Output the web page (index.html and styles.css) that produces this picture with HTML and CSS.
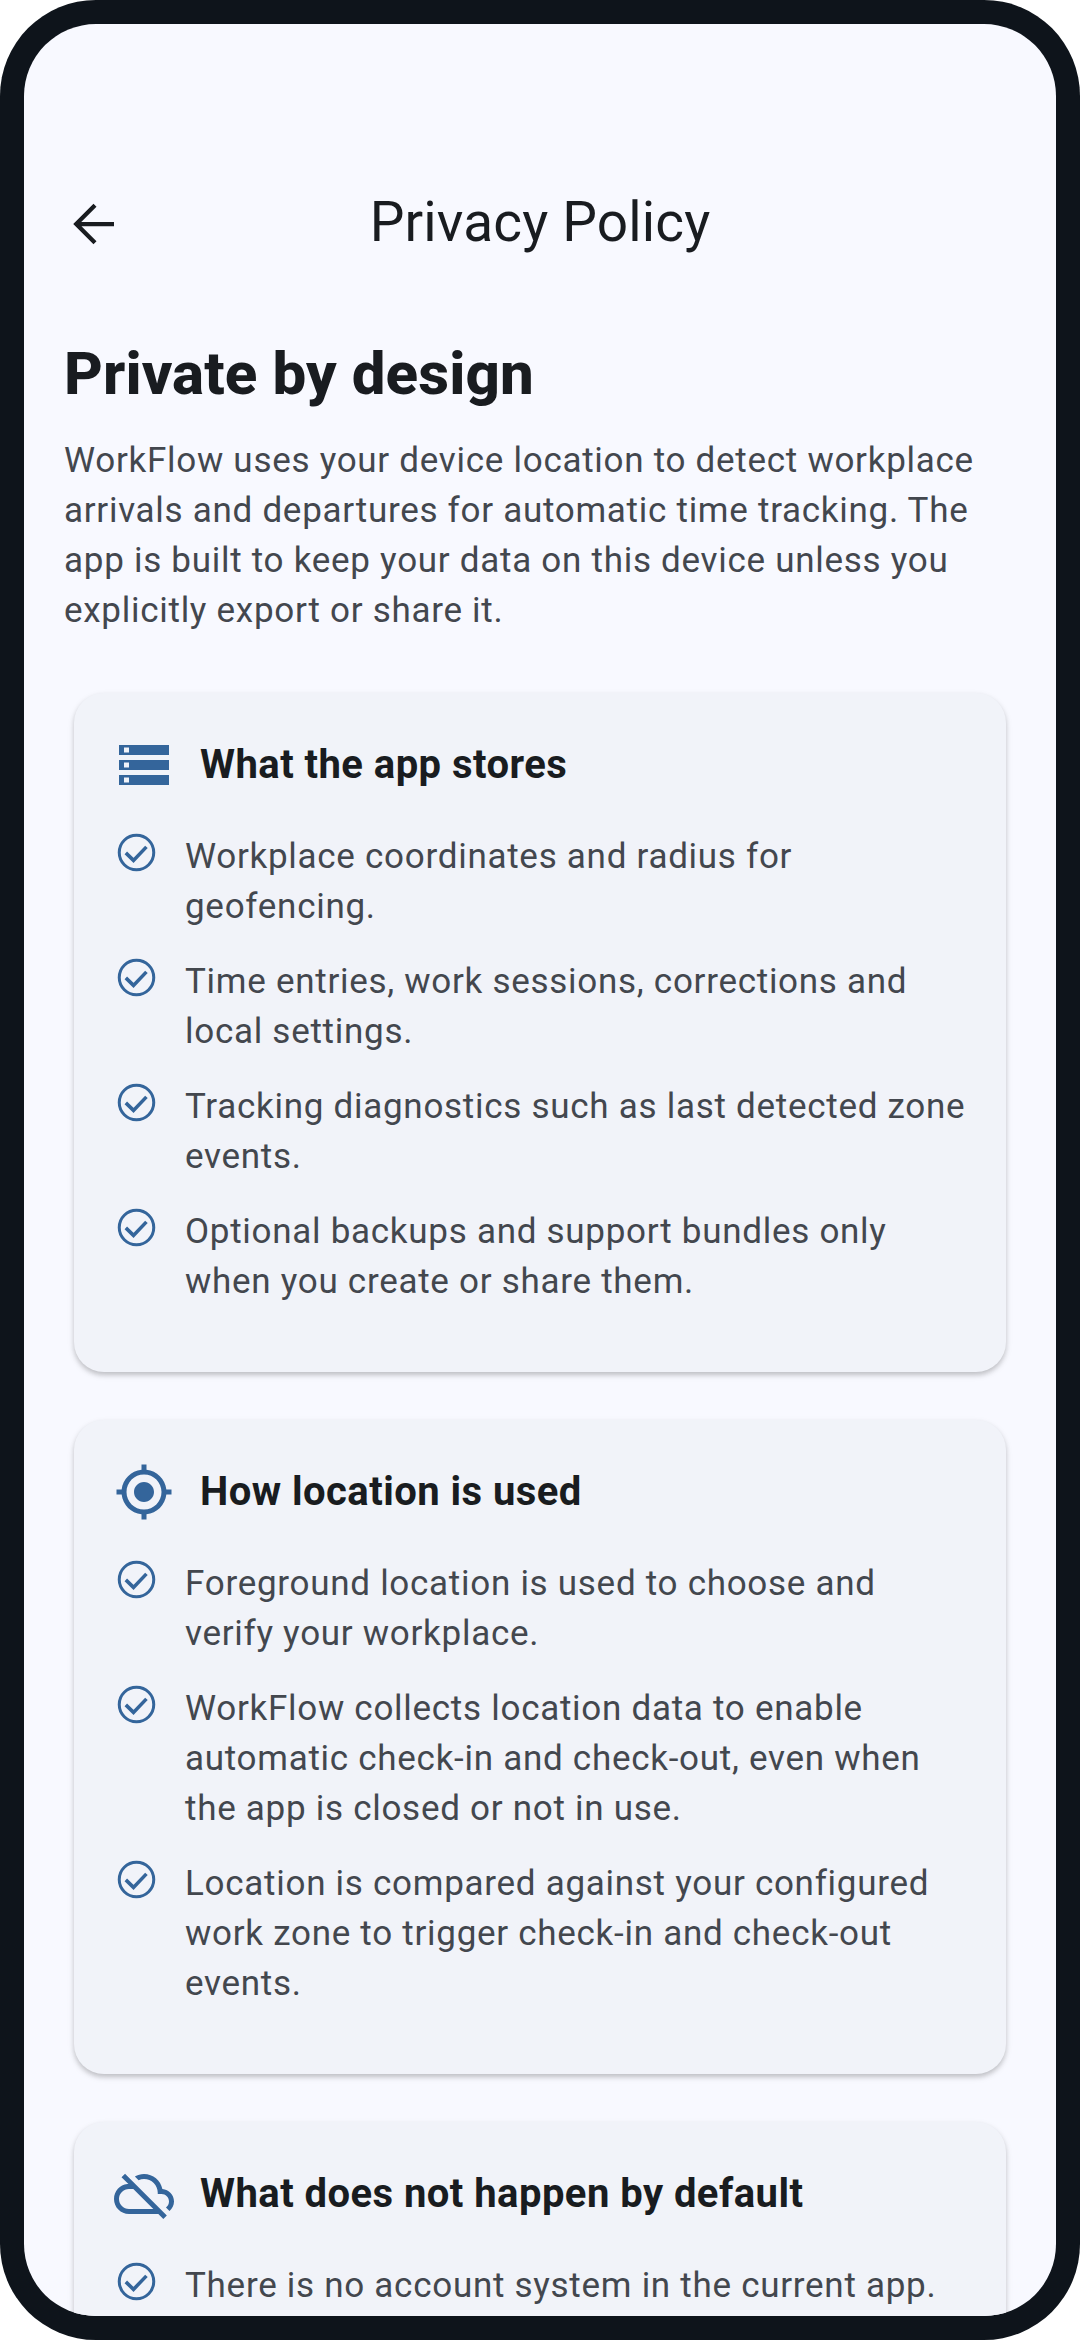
FILE: index.html
```html
<!DOCTYPE html>
<html lang="en">
<head>
    <meta charset="UTF-8">
    <meta name="viewport" content="width=device-width, initial-scale=1.0">
    <title>Privacy Policy</title>
    <link rel="stylesheet" href="styles.css">
</head>
<body>

<div class="frame">
<div class="screen">
    <svg width="0" height="0" class="defs">
        <symbol id="check" viewBox="0 0 24 24">
            <circle cx="12" cy="12" r="9.2" fill="none" stroke="currentColor" stroke-width="1.6"/>
            <path d="M6.300 12.200l4.100 4 6.900-7.200" fill="none" stroke="currentColor" stroke-width="1.900"/>
        </symbol>
    </svg>

    <header class="app-bar">
        <svg class="back" viewBox="0 0 24 24" width="60" height="60">
            <path d="M20 12H5.500M12.400 4.500L4.900 12l7.500 7.500" fill="none" stroke="currentColor" stroke-width="1.700"/>
        </svg>
        <h1>Privacy Policy</h1>
    </header>

    <main>
        <h2>Private by design</h2>
        <p class="intro">WorkFlow uses your device location to detect workplace arrivals and departures for automatic time tracking. The app is built to keep your data on this device unless you explicitly export or share it.</p>

        <section class="card">
            <div class="card-head">
                <svg class="head-icon" viewBox="0 0 24 24">
                    <path d="M2 20h20v-4H2v4zm2-3h2v2H4v-2zM2 4v4h20V4H2zm4 3H4V5h2v2zm-4 7h20v-4H2v4zm2-3h2v2H4v-2z"/>
                </svg>
                <h3>What the app stores</h3>
            </div>
            <ul>
                <li><svg class="check"><use href="#check"/></svg><span>Workplace coordinates and radius for geofencing.</span></li>
                <li><svg class="check"><use href="#check"/></svg><span>Time entries, work sessions, corrections and local settings.</span></li>
                <li><svg class="check"><use href="#check"/></svg><span>Tracking diagnostics such as last detected zone events.</span></li>
                <li><svg class="check"><use href="#check"/></svg><span>Optional backups and support bundles only when you create or share them.</span></li>
            </ul>
        </section>

        <section class="card">
            <div class="card-head">
                <svg class="head-icon" viewBox="0 0 24 24">
                    <path d="M12 8c-2.210 0-4 1.790-4 4s1.790 4 4 4 4-1.790 4-4-1.790-4-4-4zm8.940 3c-.460-4.170-3.770-7.480-7.940-7.940V1h-2v2.060C6.830 3.520 3.520 6.830 3.060 11H1v2h2.060c.460 4.170 3.770 7.480 7.940 7.940V23h2v-2.060c4.170-.460 7.480-3.770 7.940-7.940H23v-2h-2.060zM12 19c-3.870 0-7-3.130-7-7s3.130-7 7-7 7 3.130 7 7-3.130 7-7 7z"/>
                </svg>
                <h3>How location is used</h3>
            </div>
            <ul>
                <li><svg class="check"><use href="#check"/></svg><span>Foreground location is used to choose and verify your workplace.</span></li>
                <li><svg class="check"><use href="#check"/></svg><span>WorkFlow collects location data to enable automatic check-in and check-out, even when the app is closed or not in use.</span></li>
                <li><svg class="check"><use href="#check"/></svg><span>Location is compared against your configured work zone to trigger check-in and check-out events.</span></li>
            </ul>
        </section>

        <section class="card card-cut">
            <div class="card-head">
                <svg class="head-icon" viewBox="0 0 24 24">
                    <path d="M24 15c0-2.640-2.050-4.780-4.650-4.960C18.670 6.590 15.640 4 12 4c-1.330 0-2.570.360-3.650.970l1.490 1.490C10.510 6.170 11.230 6 12 6c3.040 0 5.500 2.460 5.500 5.500v.5H19c1.660 0 3 1.340 3 3 0 .990-.480 1.850-1.210 2.400l1.410 1.410c1.090-.920 1.800-2.270 1.800-3.810zM4.410 3.860L3 5.270l2.770 2.770h-.420C2.340 8.360 0 10.910 0 14c0 3.310 2.690 6 6 6h11.730l2 2 1.410-1.410L4.410 3.860zM6 18c-2.210 0-4-1.790-4-4s1.790-4 4-4h1.730l8 8H6z"/>
                </svg>
                <h3>What does not happen by default</h3>
            </div>
            <ul>
                <li><svg class="check"><use href="#check"/></svg><span>There is no account system in the current app.</span></li>
            </ul>
        </section>
    </main>
</div>
</div>

</body>
</html>
```

FILE: styles.css
```css
/* Page and device frame */
html, body {
    margin: 0;
    height: 100%;
}
body {
    background-color: #fff;
    font-family: 'Roboto', sans-serif;
    color: #191c20;
}
.frame {
    height: 100%;
    box-sizing: border-box;
    padding: 24px;
    background-color: #0e141b;
    border-radius: 96px;
}
.screen {
    height: 100%;
    background-color: #f8f9ff;
    border-radius: 72px;
    overflow: hidden;
}
.defs {
    display: block;
}

/* Top bar */
.app-bar {
    display: grid;
    grid-template-columns: 60px 1fr 60px;
    align-items: center;
    padding: 168px 40px 0;
}
.back {
    margin: 2px 0 -2px;
    color: #191c20;
}
.app-bar h1 {
    margin: 0;
    font-size: 55px;
    font-weight: 400;
    line-height: 60px;
    letter-spacing: 0.15px;
    text-align: center;
}

/* Content */
main {
    padding: 0 50px;
}
h2 {
    margin: 0 -10px;
    padding-top: 86px;
    font-size: 60px;
    font-weight: 800;
    line-height: 72px;
    letter-spacing: 0.1px;
}
.intro {
    margin: 26px -10px 57px;
    font-size: 35px;
    line-height: 50px;
    letter-spacing: 0.72px;
    color: #43474e;
}

/* Cards */
.card {
    margin-bottom: 48px;
    padding: 42px 40px 40px;
    background-color: #f1f3f9;
    border-radius: 30px;
    box-shadow: 0 3px 5px rgba(0, 0, 0, 0.2), 0 3px 10px rgba(0, 0, 0, 0.05);
}
.card-cut {
    padding-bottom: 200px;
}
.card-head {
    display: flex;
    align-items: center;
    gap: 26px;
    margin-bottom: 37px;
    color: #34659b;
}
.card-head h3 {
    margin: 0;
    font-size: 40px;
    font-weight: 700;
    line-height: 60px;
    letter-spacing: 0.45px;
    color: #191c20;
}
.head-icon {
    flex: none;
    width: 60px;
    height: 60px;
    fill: currentColor;
}
ul {
    margin: 0;
    padding: 0;
    list-style: none;
}
li {
    display: flex;
    gap: 26px;
    margin-bottom: 25px;
    font-size: 35px;
    line-height: 50px;
    letter-spacing: 0.72px;
    color: #43474e;
}
.check {
    flex: none;
    width: 45px;
    height: 45px;
    margin-top: -2px;
    color: #34659b;
}
```
